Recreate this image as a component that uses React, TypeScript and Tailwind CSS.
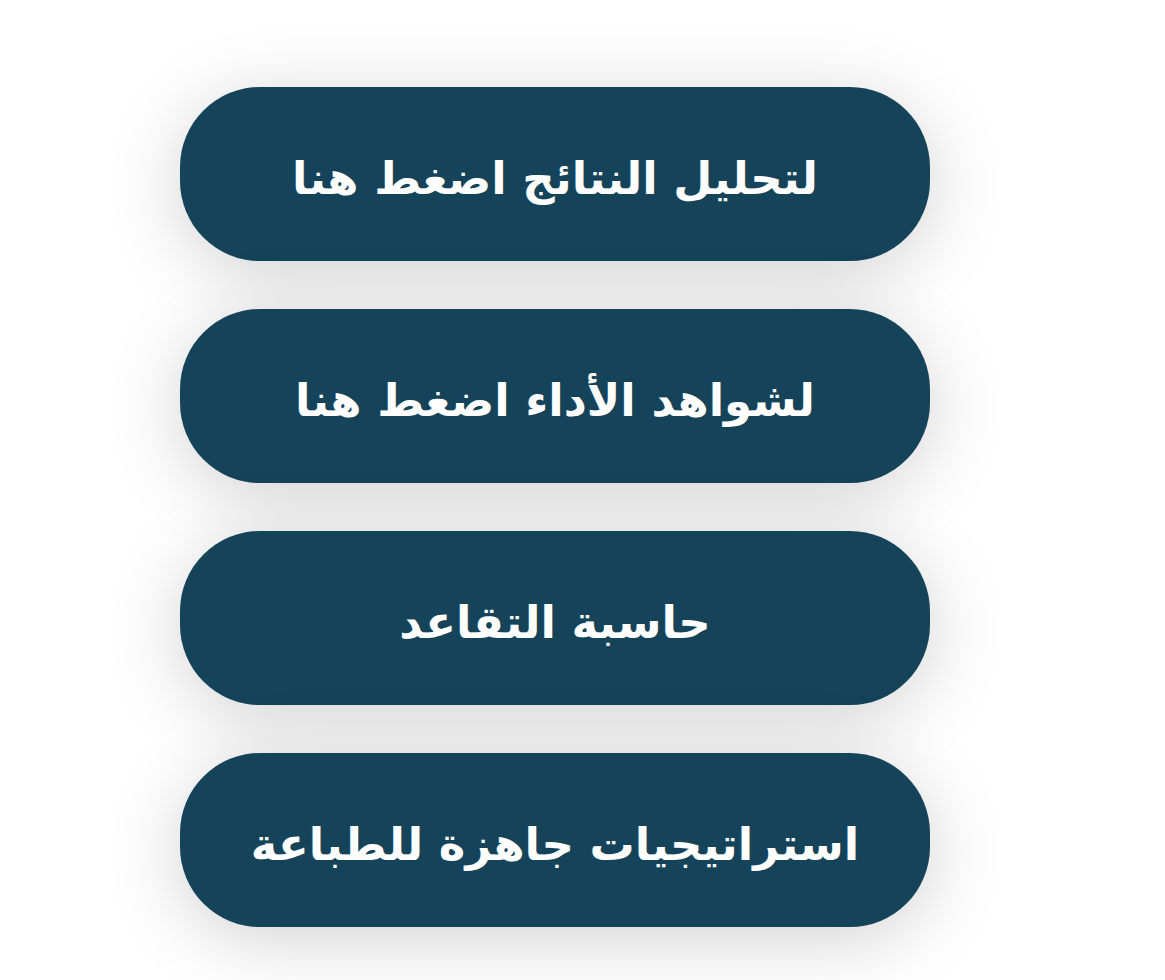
import React from 'react';

const items = [
    'لتحليل النتائج اضغط هنا',
    'لشواهد الأداء اضغط هنا',
    'حاسبة التقاعد',
    'استراتيجيات جاهزة للطباعة',
];

export default function App() {
    return (
        <div className="min-h-[980px] bg-white pt-[87px] pl-[180px]">
            <div className="flex w-[750px] flex-col gap-[48px]">
                {items.map((label) => (
                    <button
                        key={label}
                        dir="rtl"
                        className="flex h-[174px] w-full items-center justify-center rounded-[80px] bg-[#15445a] pt-[10px] text-[45px] font-bold text-white shadow-[0_12px_75px_rgba(0,0,0,0.18)]"
                        style={{ fontFamily: '"DejaVu Sans", sans-serif' }}
                    >
                        {label}
                    </button>
                ))}
            </div>
        </div>
    );
}
